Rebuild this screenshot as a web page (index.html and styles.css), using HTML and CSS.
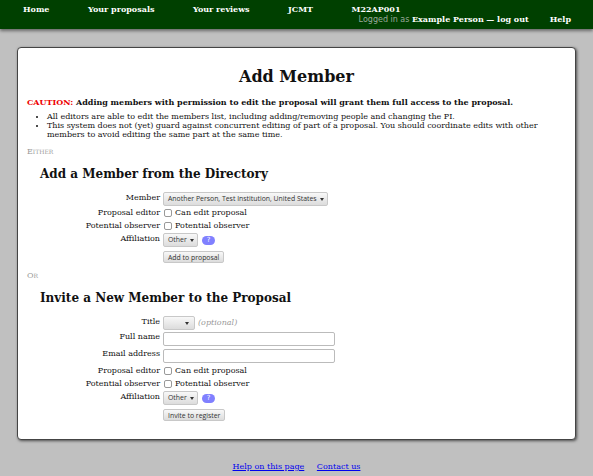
FILE: index.html
```html
<!DOCTYPE html>
<html>
<head>
<meta charset="utf-8">
<link rel="stylesheet" href="styles.css">
</head>
<body>
<div class="topbar">
  <ul class="nav-left">
    <li><a>Home</a></li>
    <li><a>Your proposals</a></li>
    <li><a>Your reviews</a></li>
    <li><a>JCMT</a></li>
    <li><a>M22AP001</a></li>
  </ul>
  <ul class="nav-right">
    <li class="login"><span class="muted">Logged in as</span> <b>Example Person</b> <b>&mdash; log out</b></li>
    <li class="help"><b>Help</b></li>
  </ul>
</div>

<div class="panel">
  <h1>Add Member</h1>
  <p class="caution"><span class="red">CAUTION:</span> Adding members with permission to edit the proposal will grant them full access to the proposal.</p>
  <ul class="notes">
    <li>All editors are able to edit the members list, including adding/removing people and changing the PI.</li>
    <li>This system does not (yet) guard against concurrent editing of part of a proposal. You should coordinate edits with other members to avoid editing the same part at the same time.</li>
  </ul>

  <p class="sep">Either</p>
  <h2>Add a Member from the Directory</h2>
  <div class="form">
    <label class="lbl">Member</label>
    <div class="ctl"><span class="sel sel-member">Another Person, Test Institution, United States <i class="caret"></i></span></div>
    <label class="lbl">Proposal editor</label>
    <div class="ctl chk"><span class="cb"></span>Can edit proposal</div>
    <label class="lbl">Potential observer</label>
    <div class="ctl chk"><span class="cb"></span>Potential observer</div>
    <label class="lbl">Affiliation</label>
    <div class="ctl"><span class="sel sel-aff">Other <i class="caret"></i></span><span class="q">?</span></div>
    <span></span>
    <div class="ctl"><span class="btn">Add to proposal</span></div>
  </div>

  <p class="sep">Or</p>
  <h2>Invite a New Member to the Proposal</h2>
  <div class="form">
    <label class="lbl">Title</label>
    <div class="ctl"><span class="sel sel-title"><i class="caret"></i></span><span class="opt">(optional)</span></div>
    <label class="lbl">Full name</label>
    <div class="ctl"><span class="inp"></span></div>
    <label class="lbl">Email address</label>
    <div class="ctl"><span class="inp"></span></div>
    <label class="lbl">Proposal editor</label>
    <div class="ctl chk"><span class="cb"></span>Can edit proposal</div>
    <label class="lbl">Potential observer</label>
    <div class="ctl chk"><span class="cb"></span>Potential observer</div>
    <label class="lbl">Affiliation</label>
    <div class="ctl"><span class="sel sel-aff">Other <i class="caret"></i></span><span class="q">?</span></div>
    <span></span>
    <div class="ctl"><span class="btn">Invite to register</span></div>
  </div>
</div>

<div class="footer">
  <a href="#">Help on this page</a>
  <a href="#">Contact us</a>
</div>
</body>
</html>
```

FILE: styles.css
```css
html, body { margin: 0; padding: 0; }
body {
  background: #c0c0c0;
  font-family: "DejaVu Serif", serif;
  font-size: 8px;
  color: #111;
  width: 593px;
  height: 476px;
  overflow: hidden;
}
.topbar {
  background: #004000;
  height: 29px;
  box-shadow: 0 2px 3px rgba(0,0,0,0.45);
  color: #fff;
  font-size: 8px;
  line-height: 10px;
}
.topbar ul { list-style: none; margin: 0; padding: 0; display: flex; }
.nav-left { padding: 4px 0 0 23px !important; gap: 38.5px; }
.nav-left li { font-weight: bold; }
.nav-right { justify-content: flex-end; padding-right: 22px !important; }
.nav-right .login { margin-right: 21px; }
.muted { color: #9aa99a; font-family: "DejaVu Sans", sans-serif; font-weight: normal; }
.panel {
  margin: 18px 17px 0 17px;
  background: #fff;
  border: 1px solid #444;
  border-radius: 4px;
  box-shadow: 1px 1px 3px rgba(0,0,0,0.6);
  height: 393px;
  box-sizing: border-box;
  padding: 1px 9px 0 9px;
}
h1 {
  text-align: center;
  font-size: 16px;
  margin: 18px 0 9px 0;
  line-height: 20px;
}
.caution { font-weight: bold; margin: 0; line-height: 12px; }
.red { color: #e00; }
.notes { margin: 4px 0 0 0; padding-left: 20px; line-height: 9px; }
.sep {
  font-variant: small-caps;
  color: #999;
  margin: 7px 0 0 0;
  line-height: 12px;
}
h2 {
  font-size: 12px;
  margin: 8px 0 10px 13px;
  line-height: 16px;
}
.form {
  display: grid;
  grid-template-columns: 133px 1fr;
  column-gap: 3px;
  row-gap: 1px;
  align-items: start;
}
.lbl { text-align: right; line-height: 10px; padding-top: 1px; }
.ctl { display: flex; align-items: center; line-height: 10px; min-height: 12px; }
.sel {
  display: inline-flex;
  align-items: center;
  height: 14px;
  box-sizing: border-box;
  border: 1px solid #c8c8c8;
  border-radius: 2px;
  background: linear-gradient(#f8f8f8, #dcdcdc);
  font-family: "Open Sans", sans-serif;
  font-size: 6.9px;
  color: #333;
  padding: 0 3px 0 4px;
}
.sel-member { width: 165px; }
.sel-aff { width: 35px; }
.sel-title { width: 32px; justify-content: flex-end; padding-right: 5px; }
.caret {
  display: inline-block;
  width: 0; height: 0;
  border-left: 2.5px solid transparent;
  border-right: 2.5px solid transparent;
  border-top: 3px solid #333;
  margin-left: 3px;
}
.cb {
  display: inline-block;
  width: 6px; height: 6px;
  border: 1px solid #999;
  border-radius: 2px;
  margin: 0 3px 0 1px;
  background: #fff;
}
.q {
  display: inline-flex;
  align-items: center;
  justify-content: center;
  width: 13px; height: 9px;
  border-radius: 5px;
  background: #8080ff;
  color: #fff;
  font-family: "DejaVu Sans", sans-serif;
  font-size: 7px;
  margin-left: 4px;
}
.btn {
  display: inline-block;
  height: 12px;
  line-height: 11px;
  margin-top: 3px;
  box-sizing: border-box;
  border: 1px solid #c8c8c8;
  border-radius: 2px;
  background: linear-gradient(#f8f8f8, #dcdcdc);
  font-family: "Open Sans", sans-serif;
  font-size: 6.9px;
  color: #333;
  padding: 0 4px;
}
.inp {
  display: inline-block;
  width: 172px; height: 14px;
  margin: 1px 0;
  box-sizing: border-box;
  border: 1px solid #bbb;
  border-radius: 2px;
  background: #fff;
}
.opt { font-style: italic; color: #999; margin-left: 3px; }
.footer {
  text-align: center;
  margin-top: 22px;
  font-size: 8px;
  line-height: 10px;
}
.footer a { color: #00e; margin: 0 5px; }
```
